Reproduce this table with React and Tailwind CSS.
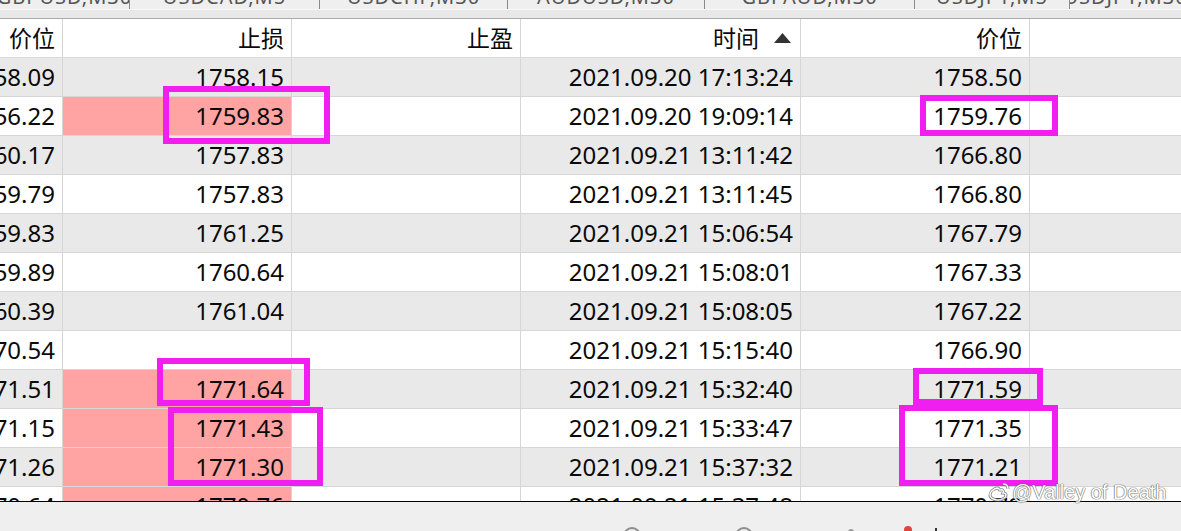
const rows = [
  ["1758.09", "1758.15", false, "2021.09.20 17:13:24", "1758.50"],
  ["1756.22", "1759.83", true, "2021.09.20 19:09:14", "1759.76"],
  ["1760.17", "1757.83", false, "2021.09.21 13:11:42", "1766.80"],
  ["1759.79", "1757.83", false, "2021.09.21 13:11:45", "1766.80"],
  ["1759.83", "1761.25", false, "2021.09.21 15:06:54", "1767.79"],
  ["1759.89", "1760.64", false, "2021.09.21 15:08:01", "1767.33"],
  ["1760.39", "1761.04", false, "2021.09.21 15:08:05", "1767.22"],
  ["1770.54", "", false, "2021.09.21 15:15:40", "1766.90"],
  ["1771.51", "1771.64", true, "2021.09.21 15:32:40", "1771.59"],
  ["1771.15", "1771.43", true, "2021.09.21 15:33:47", "1771.35"],
  ["1771.26", "1771.30", true, "2021.09.21 15:37:32", "1771.21"],
  ["1770.64", "1770.76", true, "2021.09.21 15:37:48", "1770.78"],
];

const tabs = [
  ["GBPUSD,M30", "w-[130px]"],
  ["USDCAD,M5", "w-[190px]"],
  ["USDCHF,M30", "w-[188px]"],
  ["AUDUSD,M30", "w-[197px]"],
  ["GBPAUD,M30", "w-[210px]"],
  ["USDJPY,M5", "w-[155px]"],
  ["USDJPY,M30", "w-[111px]"],
];

const grid = "grid grid-cols-[63px_229px_229px_280px_229px_1fr]";
const cell =
  "flex items-center justify-end overflow-hidden whitespace-nowrap pr-[7px] border-r border-[#d6d6d6]";

function Box({ className }) {
  return <div className={`pointer-events-none absolute border-[6px] border-[#f01ff0] ${className}`} />;
}

export default function App() {
  return (
    <div className="relative h-[531px] w-[1181px] overflow-hidden bg-[#efefef] font-['Noto_Sans','Noto_Sans_CJK_SC',sans-serif] text-[#0a0a0a]">
      {/* tab strip (cut off at top) */}
      <div className="flex h-[9px] overflow-hidden bg-[#efefef]">
        {tabs.map(([t, w], i) => (
          <div
            key={i}
            className={`relative flex h-[9px] shrink-0 items-end justify-center overflow-hidden ${w} ${
              i < tabs.length - 1 ? "border-r border-[#8a8a8a]" : ""
            }`}
          >
            <span className="mb-[2px] text-[20px] leading-none tracking-[1px] text-[#555]">{t}</span>
          </div>
        ))}
      </div>
      <div className="h-[9px] border-t border-[#f8f8f8] bg-[#e8e8e8]" />
      <div className="h-px bg-[#a9a9a9]" />

      {/* table */}
      <div className="h-[482px] overflow-hidden bg-white">
        <div className={`${grid} h-[39px] border-b border-[#dadada] bg-white text-[23px]`}>
          <div className={`${cell} pr-[5px]`}>价位</div>
          <div className={`${cell} pr-[5px]`}>止损</div>
          <div className={`${cell} pr-[5px]`}>止盈</div>
          <div className={`${cell} pr-[9px]`}>
            <span>时间</span>
            <svg width="17" height="10" viewBox="0 0 17 10" className="ml-[15px]">
              <polygon points="8.5,0 17,10 0,10" fill="#333" />
            </svg>
          </div>
          <div className={`${cell} pr-[5px]`}>价位</div>
          <div className="" />
        </div>
        {rows.map(([p, sl, pink, time, price], i) => (
          <div
            key={i}
            className={`${grid} h-[39px] border-b border-[#d6d6d6] text-[24px] leading-none ${
              i % 2 === 0 ? "bg-[#e9e9e9]" : "bg-white"
            }`}
          >
            <div className={cell}>{p}</div>
            <div className={`${cell} ${pink ? "bg-[#ffa3a3]" : ""}`}>{sl}</div>
            <div className={cell}></div>
            <div className={cell}>{time}</div>
            <div className={cell}>{price}</div>
            <div />
          </div>
        ))}
      </div>
      <div className="h-px bg-black" />

      {/* bottom toolbar (mostly cut off) */}
      <div className="flex h-[29px] items-start bg-[#efefef] pt-[25px]">
        <div className="ml-[623px] h-[18px] w-[18px] rounded-full border-2 border-[#8c8c8c]" />
        <div className="ml-[94px] h-[18px] w-[18px] rounded-full border-2 border-[#8c8c8c]" />
        <div className="ml-[95px] mt-[2px] h-[6px] w-[6px] rounded-full bg-[#9a9a9a]" />
        <div className="ml-[50px] -mt-[1px] h-[8px] w-[8px] rounded-full bg-[#e0453c]" />
        <div className="ml-[23px] mt-[1px] h-[8px] w-[2px] bg-[#333]" />
      </div>

      {/* annotation boxes */}
      <Box className="left-[163px] top-[86px] h-[58px] w-[167px]" />
      <Box className="left-[920px] top-[95px] h-[41px] w-[138px]" />
      <Box className="left-[157px] top-[358px] h-[48px] w-[153px]" />
      <Box className="left-[168px] top-[407px] h-[79px] w-[155px]" />
      <Box className="left-[913px] top-[368px] h-[37px] w-[130px]" />
      <Box className="left-[899px] top-[405px] h-[81px] w-[159px]" />

      {/* watermark */}
      <div className="pointer-events-none absolute left-[988px] top-[481px] flex items-center gap-[2px] opacity-90">
        <svg width="22" height="22" viewBox="0 0 22 22" fill="none">
          <path
            d="M9 7c-4 1-7 4-7 7 0 3 4 5 8 5s8-2 8-5c0-2-2-2-3-2 1-2 0-4-3-3-1 0-1 0-1-1 0-1-1-1-2-1z"
            stroke="#777"
            strokeWidth="3"
          />
          <path
            d="M9 7c-4 1-7 4-7 7 0 3 4 5 8 5s8-2 8-5c0-2-2-2-3-2 1-2 0-4-3-3-1 0-1 0-1-1 0-1-1-1-2-1z"
            stroke="#fff"
            strokeWidth="1.4"
          />
          <path d="M15 3c3 0 5 2 5 5" stroke="#777" strokeWidth="3" />
          <path d="M15 3c3 0 5 2 5 5" stroke="#fff" strokeWidth="1.4" />
        </svg>
        <span className="font-['Liberation_Sans',sans-serif] text-[20px] leading-none text-white [text-shadow:0_0_1px_#555,0_0_1px_#555,0_0_1px_#555]">
          @Valley of Death
        </span>
      </div>
    </div>
  );
}
